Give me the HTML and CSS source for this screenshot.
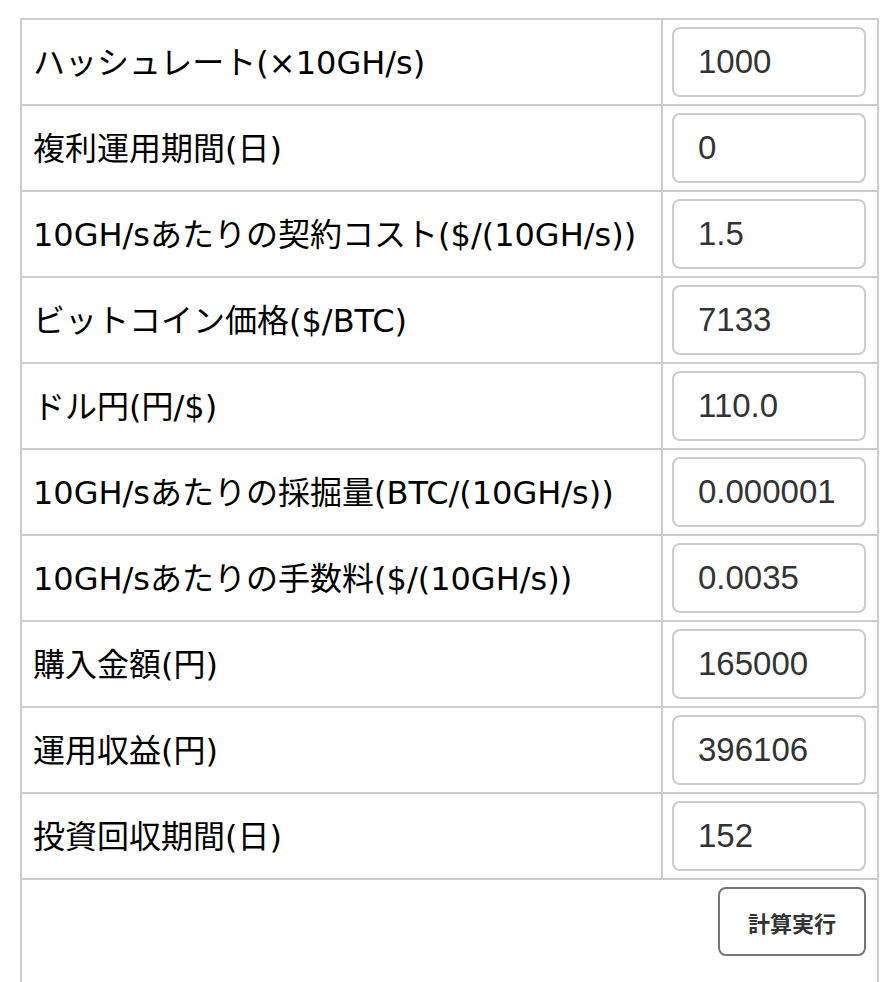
FILE: index.html
```html
<!DOCTYPE html>
<html lang="ja">
<head>
  <meta charset="UTF-8">
  <title>マイニング収益計算</title>
  <link rel="stylesheet" href="styles.css">
</head>
<body>
  <table class="calc">
    <tbody>
      <tr>
        <td class="label">ハッシュレート(×10GH/s)</td>
        <td class="field"><input type="text" value="1000"></td>
      </tr>
      <tr>
        <td class="label">複利運用期間(日)</td>
        <td class="field"><input type="text" value="0"></td>
      </tr>
      <tr>
        <td class="label">10GH/sあたりの契約コスト($/(10GH/s))</td>
        <td class="field"><input type="text" value="1.5"></td>
      </tr>
      <tr>
        <td class="label">ビットコイン価格($/BTC)</td>
        <td class="field"><input type="text" value="7133"></td>
      </tr>
      <tr>
        <td class="label">ドル円(円/$)</td>
        <td class="field"><input type="text" value="110.0"></td>
      </tr>
      <tr>
        <td class="label">10GH/sあたりの採掘量(BTC/(10GH/s))</td>
        <td class="field"><input type="text" value="0.000001"></td>
      </tr>
      <tr>
        <td class="label">10GH/sあたりの手数料($/(10GH/s))</td>
        <td class="field"><input type="text" value="0.0035"></td>
      </tr>
      <tr>
        <td class="label">購入金額(円)</td>
        <td class="field"><input type="text" value="165000" readonly></td>
      </tr>
      <tr>
        <td class="label">運用収益(円)</td>
        <td class="field"><input type="text" value="396106" readonly></td>
      </tr>
      <tr>
        <td class="label">投資回収期間(日)</td>
        <td class="field"><input type="text" value="152" readonly></td>
      </tr>
      <tr>
        <td class="actions" colspan="2">
          <button type="button">計算実行</button>
        </td>
      </tr>
    </tbody>
  </table>
</body>
</html>
```

FILE: styles.css
```css
body {
  margin: 0;
  padding: 18px 0 0 20px;
  background-color: #fff;
  font-family: "DejaVu Sans", "Noto Sans CJK JP", sans-serif;
}
.calc {
  width: 859px;
  border-collapse: collapse;
  border: 2px solid #ccc;
}
.calc td {
  border: 2px solid #ccc;
}
.label {
  height: 79px;
  padding: 0 11px 5px 11px;
  font-size: 32px;
  color: #000;
  vertical-align: middle;
  white-space: nowrap;
}
.field {
  width: 194px;
  padding: 7px 11px 7px 9px;
  vertical-align: middle;
}
.field input {
  box-sizing: border-box;
  width: 194px;
  height: 70px;
  margin: 0;
  padding: 0 18px 0 24px;
  border: 2px solid #ccc;
  border-radius: 8px;
  font-family: "Liberation Sans", Arial, sans-serif;
  font-size: 33px;
  color: #333;
  background-color: #fff;
  outline: none;
}
.actions {
  padding: 7px 11px 60px 0;
  text-align: right;
}
.actions button {
  width: 148px;
  height: 69px;
  border: 2px solid #767676;
  border-radius: 8px;
  background-color: #fff;
  font-family: "Noto Sans CJK JP", sans-serif;
  font-size: 22px;
  font-weight: bold;
  color: #333;
  cursor: pointer;
}
```
